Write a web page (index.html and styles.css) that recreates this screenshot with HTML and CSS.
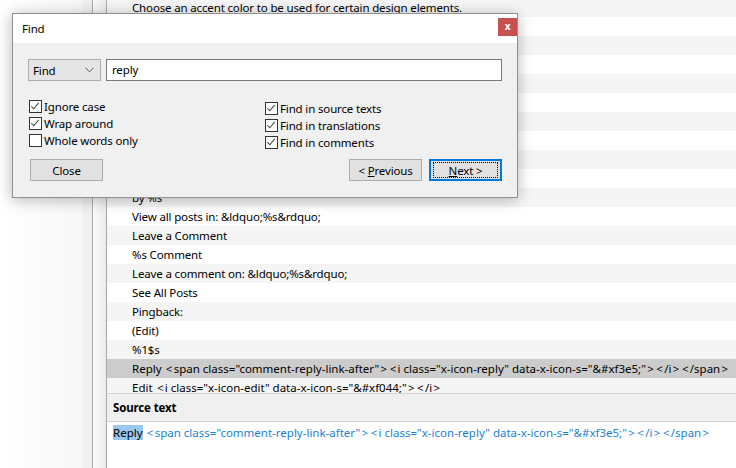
FILE: index.html
```html
<!DOCTYPE html>
<html>
<head>
<meta charset="utf-8">
<link rel="stylesheet" href="styles.css">
</head>
<body>
<div class="app">
  <div class="side"></div>
  <div class="gutter"></div>
  <div class="bar"></div>
  <div class="main">
    <div class="listview">
      <div class="rows">
        <div class="row">Choose an accent color to be used for certain design elements.</div>
        <div class="row"></div>
        <div class="row"></div>
        <div class="row"></div>
        <div class="row"></div>
        <div class="row"></div>
        <div class="row"></div>
        <div class="row"></div>
        <div class="row"></div>
        <div class="row"></div>
        <div class="row">by %s</div>
        <div class="row">View all posts in: &amp;ldquo;%s&amp;rdquo;</div>
        <div class="row">Leave a Comment</div>
        <div class="row">%s Comment</div>
        <div class="row">Leave a comment on: &amp;ldquo;%s&amp;rdquo;</div>
        <div class="row">See All Posts</div>
        <div class="row">Pingback:</div>
        <div class="row">(Edit)</div>
        <div class="row">%1$s</div>
        <div class="row selected code">Reply <span class="ab">&lt;</span>span class="comment-reply-link-after"<span class="ab">&gt;</span><span class="ab">&lt;</span>i class="x-icon-reply" data-x-icon-s="&amp;#xf3e5;"<span class="ab">&gt;</span><span class="ab">&lt;</span>/i<span class="ab">&gt;</span><span class="ab">&lt;</span>/span<span class="ab">&gt;</span></div>
        <div class="row code">Edit <span class="ab">&lt;</span>i class="x-icon-edit" data-x-icon-s="&amp;#xf044;"<span class="ab">&gt;</span><span class="ab">&lt;</span>/i<span class="ab">&gt;</span></div>
      </div>
    </div>
    <div class="section-head">Source text</div>
    <div class="source code"><span class="hit">Reply</span><span class="tag"> <span class="ab">&lt;</span>span class="comment-reply-link-after"<span class="ab">&gt;</span><span class="ab">&lt;</span>i class="x-icon-reply" data-x-icon-s="&amp;#xf3e5;"<span class="ab">&gt;</span><span class="ab">&lt;</span>/i<span class="ab">&gt;</span><span class="ab">&lt;</span>/span<span class="ab">&gt;</span></span></div>
  </div>
</div>

<div class="dialog">
  <div class="titlebar">
    <span class="title">Find</span>
    <span class="close">x</span>
  </div>
  <div class="dbody">
    <div class="searchline">
      <div class="combo"><span>Find</span>
        <svg class="chev" width="9" height="6" viewBox="0 0 9 6"><path d="M0.5 0.8 L4.5 4.8 L8.5 0.8" fill="none" stroke="#555" stroke-width="1"/></svg>
      </div>
      <div class="input">reply</div>
    </div>
    <div class="options">
      <div class="optcol">
        <div class="chk"><span class="box on"></span><span>Ignore case</span></div>
        <div class="chk"><span class="box on"></span><span>Wrap around</span></div>
        <div class="chk"><span class="box"></span><span>Whole words only</span></div>
      </div>
      <div class="optcol right">
        <div class="chk"><span class="box on"></span><span>Find in source texts</span></div>
        <div class="chk"><span class="box on"></span><span>Find in translations</span></div>
        <div class="chk"><span class="box on"></span><span>Find in comments</span></div>
      </div>
    </div>
    <div class="buttons">
      <div class="btn"><span>Close</span></div>
      <div class="spacer"></div>
      <div class="btn"><span>&lt; <u>P</u>revious</span></div>
      <div class="btn default"><span class="focus"><span><u>N</u>ext &gt;</span></span></div>
    </div>
  </div>
</div>
</body>
</html>
```
FILE: styles.css
```css
html, body {
  margin: 0;
  padding: 0;
}
body {
  width: 736px;
  height: 468px;
  overflow: hidden;
  background: #fff;
  font-family: "Noto Sans", "Open Sans", sans-serif;
  font-size: 11.5px;
  letter-spacing: -0.15px;
  color: #000;
  position: relative;
}
.app {
  display: flex;
  height: 468px;
}
.side {
  width: 83px;
  background: linear-gradient(to right, #ffffff, #f7f7f7);
}
.gutter {
  width: 9px;
  background: #f0f0f0;
  border-right: 1px solid #a9a9a9;
}
.bar {
  width: 13px;
  background: linear-gradient(to right, #fbfbfb, #ebebeb);
  border-right: 1px solid #a9a9a9;
}
.main {
  flex: 1;
  display: flex;
  flex-direction: column;
  min-width: 0;
}
.listview {
  height: 393px;
  overflow: hidden;
  border-bottom: 1px solid #d4d4d4;
}
.rows {
  margin-top: -2px;
}
.row {
  height: 19px;
  line-height: 19px;
  padding-left: 25px;
  white-space: nowrap;
  background: #fff;
}
.row:nth-child(odd) {
  background: #f5f5f5;
}
.row.selected {
  background: #cccccc;
}
.code {
  letter-spacing: 0;
}
.ab {
  padding: 0 1.3px;
}
.section-head {
  height: 27px;
  line-height: 27px;
  background: #f0f0f0;
  border-bottom: 1px solid #d4d4d4;
  padding-left: 6px;
  font-weight: bold;
}
.source {
  flex: 1;
  padding: 2px 0 0 6px;
  line-height: 17px;
  white-space: nowrap;
}
.hit {
  background: #99c9ef;
}
.tag {
  color: #1a7fd9;
}

/* dialog */
.dialog {
  position: absolute;
  left: 12px;
  top: 13px;
  width: 504px;
  height: 183px;
  border: 1px solid #8f8f8f;
  background: #f0f0f0;
  box-shadow: 0 2px 14px rgba(0, 0, 0, 0.28);
  display: flex;
  flex-direction: column;
}
.titlebar {
  height: 29px;
  background: #fff;
  display: flex;
  align-items: center;
  padding-left: 9px;
}
.title {
  flex: 1;
}
.close {
  width: 19px;
  height: 18px;
  margin-top: -3px;
  background: #c75050;
  color: #fff;
  font-weight: bold;
  font-size: 10px;
  line-height: 16px;
  text-align: center;
}
.dbody {
  padding: 16px 15px 0 15px;
}
.searchline {
  display: flex;
  gap: 5px;
  height: 22px;
}
.combo {
  width: 67px;
  height: 20px;
  border: 1px solid #adadad;
  background: #e5e5e5;
  display: flex;
  align-items: center;
  padding-left: 4px;
}
.combo span {
  flex: 1;
}
.chev {
  margin-right: 6px;
}
.input {
  flex: 1;
  height: 20px;
  line-height: 20px;
  border: 1px solid #7a7a7a;
  background: #fff;
  padding-left: 5px;
}
.options {
  display: flex;
  margin-top: 17px;
  padding-left: 1px;
}
.optcol {
  width: 236px;
}
.optcol.right {
  margin-top: 2px;
}
.chk {
  height: 17px;
  display: flex;
  align-items: center;
  white-space: nowrap;
}
.box {
  width: 11px;
  height: 11px;
  border: 1px solid #333;
  background: #fff;
  margin-right: 2px;
  position: relative;
  flex: none;
}
.box.on::after {
  content: "";
  position: absolute;
  left: 3px;
  top: 0px;
  width: 3px;
  height: 7px;
  border-right: 1.3px solid #444;
  border-bottom: 1.3px solid #444;
  transform: rotate(40deg);
}
.buttons {
  display: flex;
  margin-top: 8px;
  padding-left: 2px;
  gap: 7px;
}
.spacer {
  flex: 1;
}
.btn {
  width: 71px;
  height: 20px;
  border: 1px solid #adadad;
  background: #e1e1e1;
  display: flex;
  align-items: center;
  justify-content: center;
  white-space: pre;
}
.btn.default {
  width: 69px;
  height: 18px;
  border: 2px solid #0078d7;
}
.focus {
  width: 63px;
  height: 14px;
  border: 1px dotted #000;
  display: flex;
  align-items: center;
  justify-content: center;
}
u {
  text-decoration: underline;
  text-underline-offset: 1px;
}
```
